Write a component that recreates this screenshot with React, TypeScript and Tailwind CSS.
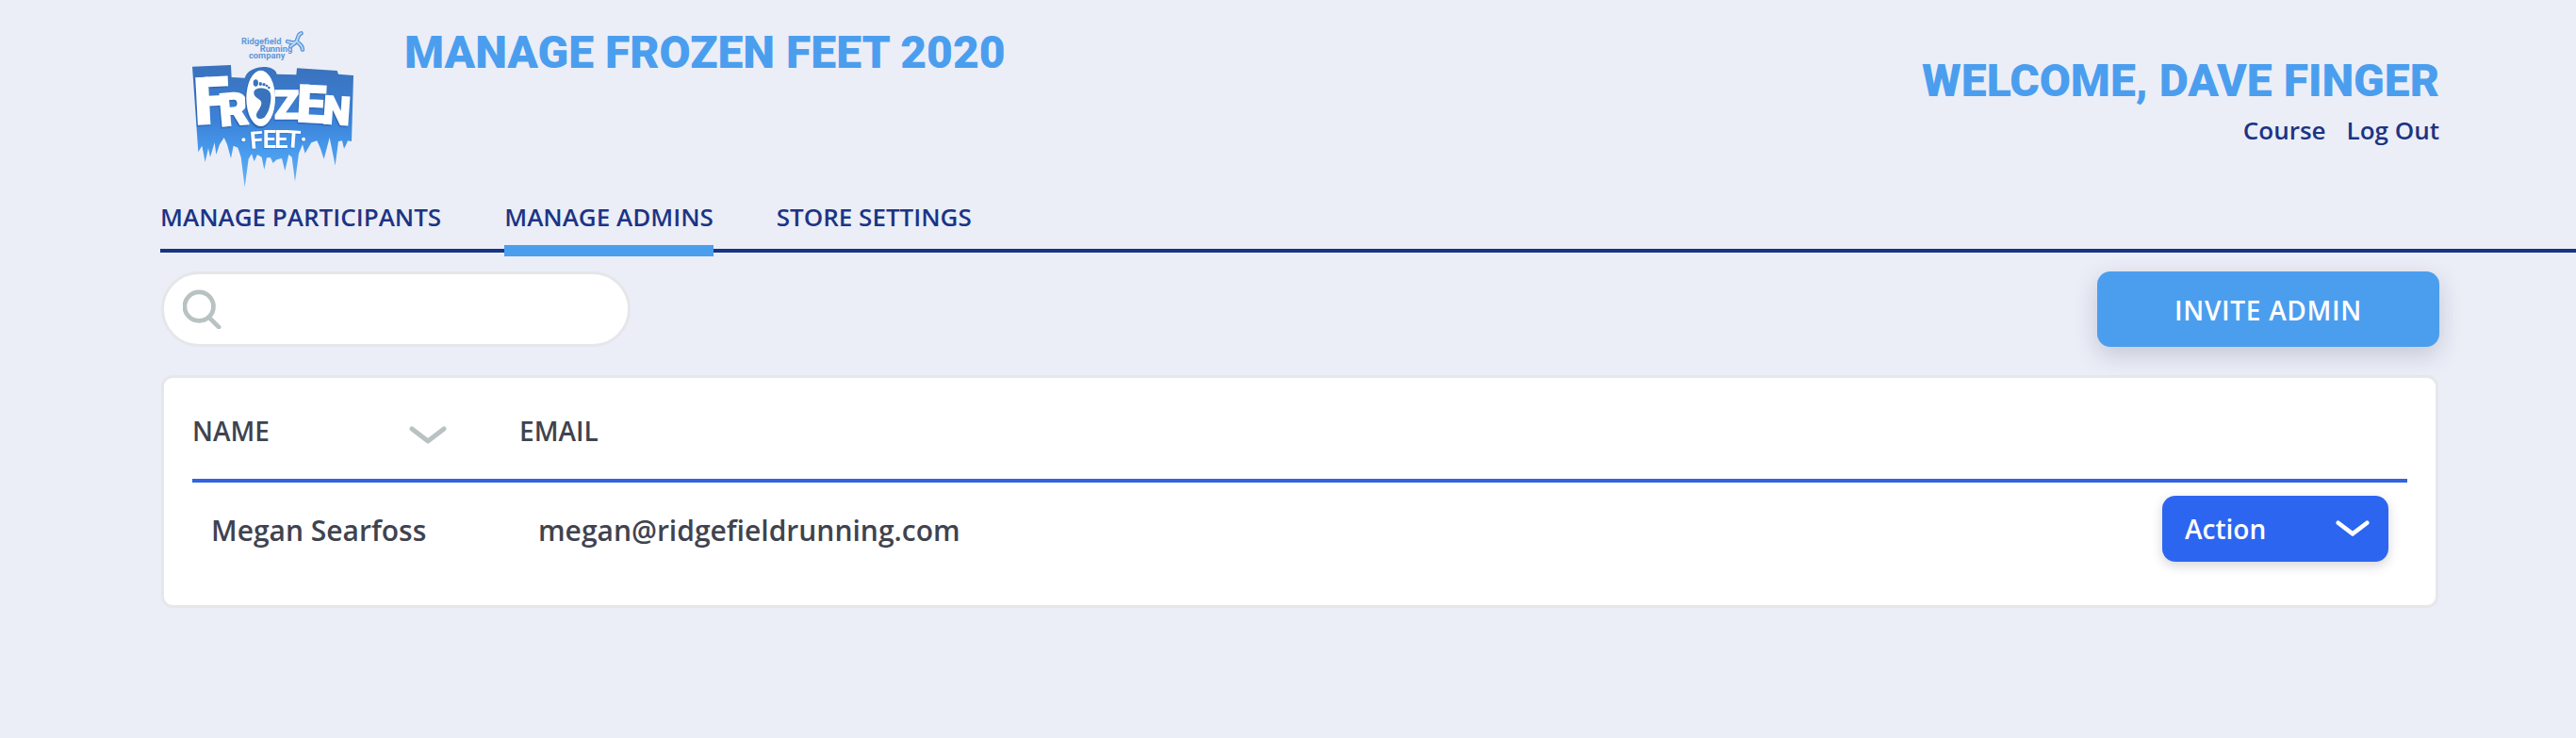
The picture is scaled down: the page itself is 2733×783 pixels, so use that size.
import { useState } from "react";

const tabs = ["Manage Participants", "Manage Admins", "Store Settings"];

const admins = [{ name: "Megan Searfoss", email: "megan@ridgefieldrunning.com" }];

function Logo() {
  return (
    <svg viewBox="130 60 522 510" className="h-[170px] w-[174px]" role="img" aria-label="Frozen Feet">
      <defs>
        <linearGradient id="ice" x1="0" y1="180" x2="0" y2="570" gradientUnits="userSpaceOnUse">
          <stop offset="0" stopColor="#3a72bd" />
          <stop offset="0.45" stopColor="#3b82d8" />
          <stop offset="0.7" stopColor="#489bee" />
          <stop offset="1" stopColor="#6db4f2" />
        </linearGradient>
      </defs>

      <g fill="#5f97d8" fontFamily="Roboto, sans-serif" fontWeight="700" fontSize="28">
        <text x="289" y="112">Ridgefield</text>
        <text x="348" y="134">Running</text>
        <text x="313" y="156">company</text>
      </g>
      {/* runner */}
      <g fill="none" strokeLinecap="round" strokeLinejoin="round">
        <path stroke="#4f8fd8" strokeWidth="13" d="M480 76C466 80 472 94 462 104C452 108 444 104 436 102M466 102C474 112 484 112 484 128M462 104C458 112 450 112 446 118" />
        <path stroke="#b9d5f5" strokeWidth="6" d="M480 76C466 80 472 94 462 104C452 108 444 104 436 102M466 102C474 112 484 112 484 128M462 104C458 112 450 112 446 118" />
      </g>

      {/* ice block */}
      <path
        fill="url(#ice)"
        d="M133 182L256 177L258 216L300 218C312 176 396 172 402 206L464 208L466 187L594 195L598 206L646 210L640 420L628 418L622 432L616 443L610 418L598 420L588 497L570 408L552 476L540 440L530 418L512 424L492 458L484 430L472 458L460 548L450 470L440 462L428 514L418 474L402 478L390 489L382 472L370 472L362 510L354 470L340 462L330 484L322 460L312 476L300 566L288 470L278 440L264 434L256 474L244 430L234 408L220 430L209 462L204 424L190 470L184 442L174 486L164 434L152 454Z"
      />

      <g
        className="drop-shadow-[-3px_4px_0_#2f66b4]"
        fill="#ffffff"
        stroke="#ffffff"
        strokeWidth="5"
        fontFamily="Roboto, sans-serif"
        fontWeight="900"
      >
        <text x="142" y="366" fontSize="206" transform="rotate(-3 142 366)">F</text>
        <text x="222" y="372" fontSize="144" transform="rotate(-5 222 372)">R</text>
        <text x="394" y="348" fontSize="128">Z</text>
        <text x="463" y="356" fontSize="164" transform="rotate(3 463 356)">E</text>
        <text x="546" y="362" fontSize="124" transform="rotate(4 546 362)">N</text>
      </g>

      {/* footprint inside the O */}
      <ellipse cx="349" cy="287" rx="48" ry="92" fill="#2f66b4" />
      <ellipse cx="351" cy="283" rx="46" ry="89" fill="#ffffff" />
      <g fill="#3a73bd">
        <path d="M329 267C328 252 344 249 360 251C378 254 385 264 383 286C381 312 374 332 362 344C352 351 338 349 337 338C336 326 353 314 353 298C353 284 331 284 329 267Z" />
        <ellipse cx="335" cy="234" rx="8" ry="11" />
        <ellipse cx="350" cy="237" rx="5" ry="6" />
        <circle cx="361" cy="239" r="5" />
        <circle cx="370" cy="243" r="4" />
        <circle cx="377" cy="249" r="4" />
      </g>

      <g className="drop-shadow-[-2px_2px_0_#2f76c8]" fill="#ffffff" fontFamily="Roboto, sans-serif" fontWeight="700" fontSize="76">
        <text x="319" y="444" transform="rotate(-5 319 444)">F</text>
        <text x="357" y="440">E</text>
        <text x="395" y="440">E</text>
        <text x="429" y="438" transform="rotate(4 429 438)">T</text>
        <circle cx="296" cy="415" r="6" />
        <circle cx="487" cy="413" r="6" />
      </g>
    </svg>
  );
}

function Chevron({ className }: { className: string }) {
  return (
    <svg viewBox="0 0 40 20" className={className} fill="none" stroke="currentColor" strokeWidth="5" strokeLinecap="round" strokeLinejoin="round" aria-hidden="true">
      <path d="M3 3L20 16L37 3" />
    </svg>
  );
}

export default function App() {
  const [active, setActive] = useState("Manage Admins");
  const [query, setQuery] = useState("");

  const rows = admins.filter((a) => (a.name + a.email).toLowerCase().includes(query.toLowerCase()));

  return (
    <div className="min-h-screen bg-[#ebeef7] pb-10 pl-[170px] font-['Open_Sans',sans-serif] font-semibold text-[#40434f]">
      <header className="flex h-[208px] items-start pr-[145px] text-[#4b9eee]">
        <a href="#home" className="mt-[30px] ml-[33px]">
          <Logo />
        </a>
        <h1 className="mt-6 ml-[52px] font-[Roboto,sans-serif] text-5xl leading-[64px] font-black uppercase">
          Manage Frozen Feet 2020
        </h1>
        <div className="mt-[54px] ml-auto text-right">
          <h2 className="font-[Roboto,sans-serif] text-5xl leading-[64px] font-black uppercase">
            Welcome, Dave Finger
          </h2>
          <div className="flex justify-end gap-[22px] text-[26px] leading-10 text-[#1c3484]">
            <a href="#course">Course</a>
            <a href="#logout">Log Out</a>
          </div>
        </div>
      </header>

      <nav className="flex gap-[67px] border-b-4 border-[#18357f] text-[26px] leading-[44px] text-[#1c3484] uppercase">
        {tabs.map((tab) => (
          <a
            key={tab}
            href="#tab"
            onClick={() => setActive(tab)}
            className={tab === active ? "-mb-2 border-b-12 border-[#4b9eee] pb-2" : "pb-3"}
          >
            {tab}
          </a>
        ))}
      </nav>

      <main className="pt-5 pr-[145px] pl-px">
        <div className="flex items-center justify-between">
          <label className="flex h-20 w-[498px] items-center rounded-full border-3 border-[#e5e6ea] bg-white pl-5">
            <svg viewBox="0 0 44 44" className="size-[42px] shrink-0 text-[#b9c2c2]" fill="none" stroke="currentColor" strokeWidth="5" strokeLinecap="round" aria-hidden="true">
              <circle cx="18" cy="19" r="16" />
              <path d="M29 31L40 42" />
            </svg>
            <input
              type="search"
              aria-label="Search admins"
              value={query}
              onChange={(e) => setQuery(e.target.value)}
              className="ml-3 min-w-0 flex-1 bg-transparent pr-8 text-[26px] outline-none"
            />
          </label>
          <button className="h-20 w-[363px] rounded-[14px] bg-[#4b9eee] pt-0.5 text-[28px] tracking-wide text-white uppercase shadow-[0_8px_24px_rgba(60,60,90,0.22)]">
            Invite Admin
          </button>
        </div>

        <section className="mt-[30px] mr-px rounded-xl border-3 border-[#e5e7eb] bg-white px-[30px] pb-[46px]">
          <table className="w-full text-left text-[30px]">
            <thead>
              <tr className="h-[109px] border-b-4 border-[#3263e0] text-[28px] uppercase">
                <th className="w-[347px] pt-1 font-semibold">
                  <button className="flex w-[270px] items-center justify-between uppercase">
                    Name
                    <Chevron className="mt-2.5 h-5 w-10 text-[#b9c2c2]" />
                  </button>
                </th>
                <th className="pt-1 font-semibold">Email</th>
                <th className="w-[260px]" aria-label="Actions" />
              </tr>
            </thead>
            <tbody>
              {rows.map((admin) => (
                <tr key={admin.email}>
                  <td className="pt-4 pl-5">{admin.name}</td>
                  <td className="pt-4 pl-5">{admin.email}</td>
                  <td className="pt-3.5 pr-5">
                    <div className="relative ml-auto w-60">
                      <select
                        aria-label={`Action for ${admin.name}`}
                        className="block h-[70px] w-full appearance-none rounded-[14px] bg-[#2c66f0] pl-6 text-[28px] text-white shadow-[0_4px_12px_rgba(60,60,90,0.22)]"
                      >
                        <option>Action</option>
                        <option>Edit</option>
                        <option>Remove</option>
                      </select>
                      <Chevron className="pointer-events-none absolute top-[26px] right-5 h-[18px] w-9 text-white" />
                    </div>
                  </td>
                </tr>
              ))}
            </tbody>
          </table>
        </section>
      </main>
    </div>
  );
}
